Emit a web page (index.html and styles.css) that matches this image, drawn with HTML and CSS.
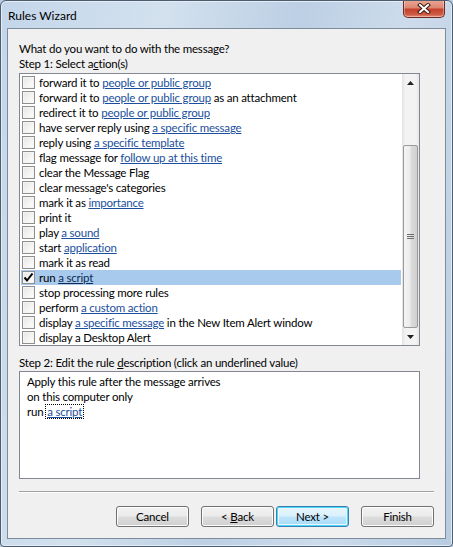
FILE: index.html
```html
<!DOCTYPE html>
<html lang="en">
<head>
  <meta charset="UTF-8">
  <title>Rules Wizard</title>
  <link rel="stylesheet" href="styles.css">
</head>
<body>
  <div class="window">
    <!-- title bar -->
    <div class="titlebar">
      <span class="title">Rules Wizard</span>
      <div class="close-btn">
        <svg width="14" height="11" viewBox="0 0 14 11">
          <path d="M3 2 L11 9 M11 2 L3 9" stroke="#3a1a14" stroke-width="4" stroke-linecap="square"/>
          <path d="M3 2 L11 9 M11 2 L3 9" stroke="#ffffff" stroke-width="2" stroke-linecap="square"/>
        </svg>
      </div>
    </div>

    <div class="client">
      <div class="label">What do you want to do with the message?</div>
      <div class="label">Step 1: Select a<u>c</u>tion(s)</div>

      <!-- actions list -->
      <div class="listbox">
        <div class="rows">
          <div class="row"><span class="check"></span><span class="txt">forward it to <a href="#">people or public group</a></span></div>
          <div class="row"><span class="check"></span><span class="txt">forward it to <a href="#">people or public group</a> as an attachment</span></div>
          <div class="row"><span class="check"></span><span class="txt">redirect it to <a href="#">people or public group</a></span></div>
          <div class="row"><span class="check"></span><span class="txt">have server reply using <a href="#">a specific message</a></span></div>
          <div class="row"><span class="check"></span><span class="txt">reply using <a href="#">a specific template</a></span></div>
          <div class="row"><span class="check"></span><span class="txt">flag message for <a href="#">follow up at this time</a></span></div>
          <div class="row"><span class="check"></span><span class="txt">clear the Message Flag</span></div>
          <div class="row"><span class="check"></span><span class="txt">clear message's categories</span></div>
          <div class="row"><span class="check"></span><span class="txt">mark it as <a href="#">importance</a></span></div>
          <div class="row"><span class="check"></span><span class="txt">print it</span></div>
          <div class="row"><span class="check"></span><span class="txt">play <a href="#">a sound</a></span></div>
          <div class="row"><span class="check"></span><span class="txt">start <a href="#">application</a></span></div>
          <div class="row"><span class="check"></span><span class="txt">mark it as read</span></div>
          <div class="row selected">
            <span class="check">
              <svg width="11" height="11" viewBox="0 0 11 11"><path d="M1.5 5.5 L4 8.5 L9.5 1.5" fill="none" stroke="#000" stroke-width="2"/></svg>
            </span>
            <span class="txt">run <a href="#" class="dark">a script</a></span>
          </div>
          <div class="row"><span class="check"></span><span class="txt">stop processing more rules</span></div>
          <div class="row"><span class="check"></span><span class="txt">perform <a href="#">a custom action</a></span></div>
          <div class="row"><span class="check"></span><span class="txt">display <a href="#">a specific message</a> in the New Item Alert window</span></div>
          <div class="row"><span class="check"></span><span class="txt">display a Desktop Alert</span></div>
        </div>

        <!-- scrollbar -->
        <div class="scrollbar">
          <div class="arrow">
            <svg width="7" height="4" viewBox="0 0 7 4"><path d="M0 4 L3.5 0 L7 4 Z" fill="#222"/></svg>
          </div>
          <div class="track"></div>
          <div class="thumb">
            <svg width="7" height="5" viewBox="0 0 7 5"><path d="M0 0.5 H7 M0 2.5 H7 M0 4.5 H7" stroke="#6d6d6d" stroke-width="1"/></svg>
          </div>
          <div class="arrow">
            <svg width="7" height="4" viewBox="0 0 7 4"><path d="M0 0 L7 0 L3.5 4 Z" fill="#222"/></svg>
          </div>
        </div>
      </div>

      <div class="label step2">Step 2: Edit the rule <u>d</u>escription (click an underlined value)</div>
      <div class="desc">
        <div>Apply this rule after the message arrives</div>
        <div>on this computer only</div>
        <div>run <a href="#" class="focus">a script</a></div>
      </div>

      <div class="separator"></div>

      <div class="buttons">
        <button class="btn">Cancel</button>
        <button class="btn gap">&lt; <u>B</u>ack</button>
        <button class="btn default">Next &gt;</button>
        <button class="btn gap">Finish</button>
      </div>
    </div>
  </div>
</body>
</html>
```

FILE: styles.css
```css
/* page */
html, body {
  margin: 0;
  padding: 0;
  background: #b9cde2;
}

body {
  font-family: 'Lato', 'Noto Sans', sans-serif;
  font-size: 11.5px;
  letter-spacing: -0.2px;
  color: #000;
}

/* window frame */
.window {
  width: 453px;
  height: 547px;
  box-sizing: border-box;
  border: 1px solid #4e5d6e;
  border-radius: 6px 6px 4px 4px;
  background: linear-gradient(100deg, #c3d6ea 0%, #d3e1ee 30%, #bccfe4 55%, #cddcec 75%, #b7cbe1 100%);
  box-shadow: inset 0 0 0 1px #e4edf6;
  display: flex;
  flex-direction: column;
  overflow: hidden;
}

.titlebar {
  height: 27px;
  display: flex;
  align-items: flex-start;
  flex-shrink: 0;
}

.title {
  margin: 7px 0 0 7px;
  line-height: 15px;
  font-size: 12px;
  letter-spacing: 0;
}

.close-btn {
  margin: -1px 7px 0 auto;
  width: 42px;
  height: 18px;
  box-sizing: border-box;
  border: 1px solid #6e2a22;
  border-top: none;
  border-radius: 0 0 5px 5px;
  background: linear-gradient(to bottom, #e9a996 0%, #dc8670 45%, #c5402c 55%, #cf5a43 85%, #e4907a 100%);
  box-shadow: inset 0 0 0 1px rgba(255, 255, 255, 0.35);
  display: flex;
  justify-content: center;
  align-items: center;
}

/* client area */
.client {
  flex: 1;
  margin: 0 6px 7px 6px;
  border: 1px solid #7d8c9d;
  background: #f0f0f0;
  padding: 12px 11px 0 11px;
  display: flex;
  flex-direction: column;
}

.label {
  line-height: 15px;
}

u {
  text-decoration: underline;
  text-underline-offset: 1px;
}

a {
  color: #1b4f9c;
  text-decoration: underline;
  text-underline-offset: 1px;
}

/* actions list */
.listbox {
  margin-top: 2px;
  height: 273px;
  width: 401px;
  box-sizing: border-box;
  border: 1px solid #828790;
  background: #fff;
  display: flex;
}

.rows {
  flex: 1;
  padding: 1px 1px 0 1px;
}

.row {
  height: 15px;
  display: flex;
  align-items: center;
  white-space: nowrap;
  overflow: hidden;
}

.row.selected {
  background: #a8cbed;
}

.check {
  width: 13px;
  height: 13px;
  box-sizing: border-box;
  margin-left: 1px;
  border: 1px solid #8e8f8f;
  background: linear-gradient(135deg, #e6e6e6 0%, #ffffff 100%);
  box-shadow: inset 0 0 0 1px #f4f4f4;
  flex-shrink: 0;
  display: flex;
  align-items: center;
  justify-content: center;
}

.txt {
  margin-left: 4px;
  line-height: 15px;
}

a.dark {
  color: #0e2a55;
}

/* scrollbar */
.scrollbar {
  width: 17px;
  display: flex;
  flex-direction: column;
  background: linear-gradient(to right, #e3e3e3 0%, #f3f3f3 20%, #f3f3f3 80%, #e6e6e6 100%);
}

.arrow {
  height: 17px;
  display: flex;
  align-items: center;
  justify-content: center;
}

.track {
  flex: 1;
}

.thumb {
  height: 183px;
  box-sizing: border-box;
  margin: 0 1px;
  border: 1px solid #9a9a9a;
  border-radius: 2px;
  background: linear-gradient(to right, #f4f4f4 0%, #ececec 45%, #dcdcdc 55%, #cfcfcf 100%);
  display: flex;
  align-items: center;
  justify-content: center;
}

/* rule description */
.step2 {
  margin-top: 9px;
  margin-bottom: 1px;
}

.desc {
  height: 108px;
  width: 401px;
  box-sizing: border-box;
  border: 1px solid #828790;
  background: #fff;
  padding: 2px 7px;
  line-height: 15px;
}

a.focus {
  outline: 1px dotted #000;
  outline-offset: 0;
  padding: 0 1px;
}

.separator {
  margin-top: 12px;
  height: 1px;
  background: #a0a0a0;
  border-bottom: 1px solid #fff;
}

/* buttons */
.buttons {
  margin-top: 13px;
  display: flex;
  justify-content: flex-end;
}

.btn {
  width: 73px;
  height: 21px;
  box-sizing: border-box;
  margin-left: 2px;
  border: 1px solid #707070;
  border-radius: 3px;
  background: linear-gradient(to bottom, #f2f2f2 0%, #ebebeb 48%, #dddddd 52%, #cfcfcf 100%);
  box-shadow: inset 0 0 0 1px #fcfcfc;
  font-family: inherit;
  font-size: 11.5px;
  letter-spacing: -0.2px;
  color: #000;
  padding: 0;
}

.btn.gap {
  margin-left: 12px;
}

.btn:first-child {
  margin-left: 0;
}

.btn.default {
  border-color: #3c7fb1;
  box-shadow: inset 0 0 0 1px #48d8fb, inset 0 0 0 2px #ecf6fb;
  background: linear-gradient(to bottom, #eaf6fd 0%, #d9f0fc 48%, #bee6fd 52%, #a7d9f5 100%);
}
```
